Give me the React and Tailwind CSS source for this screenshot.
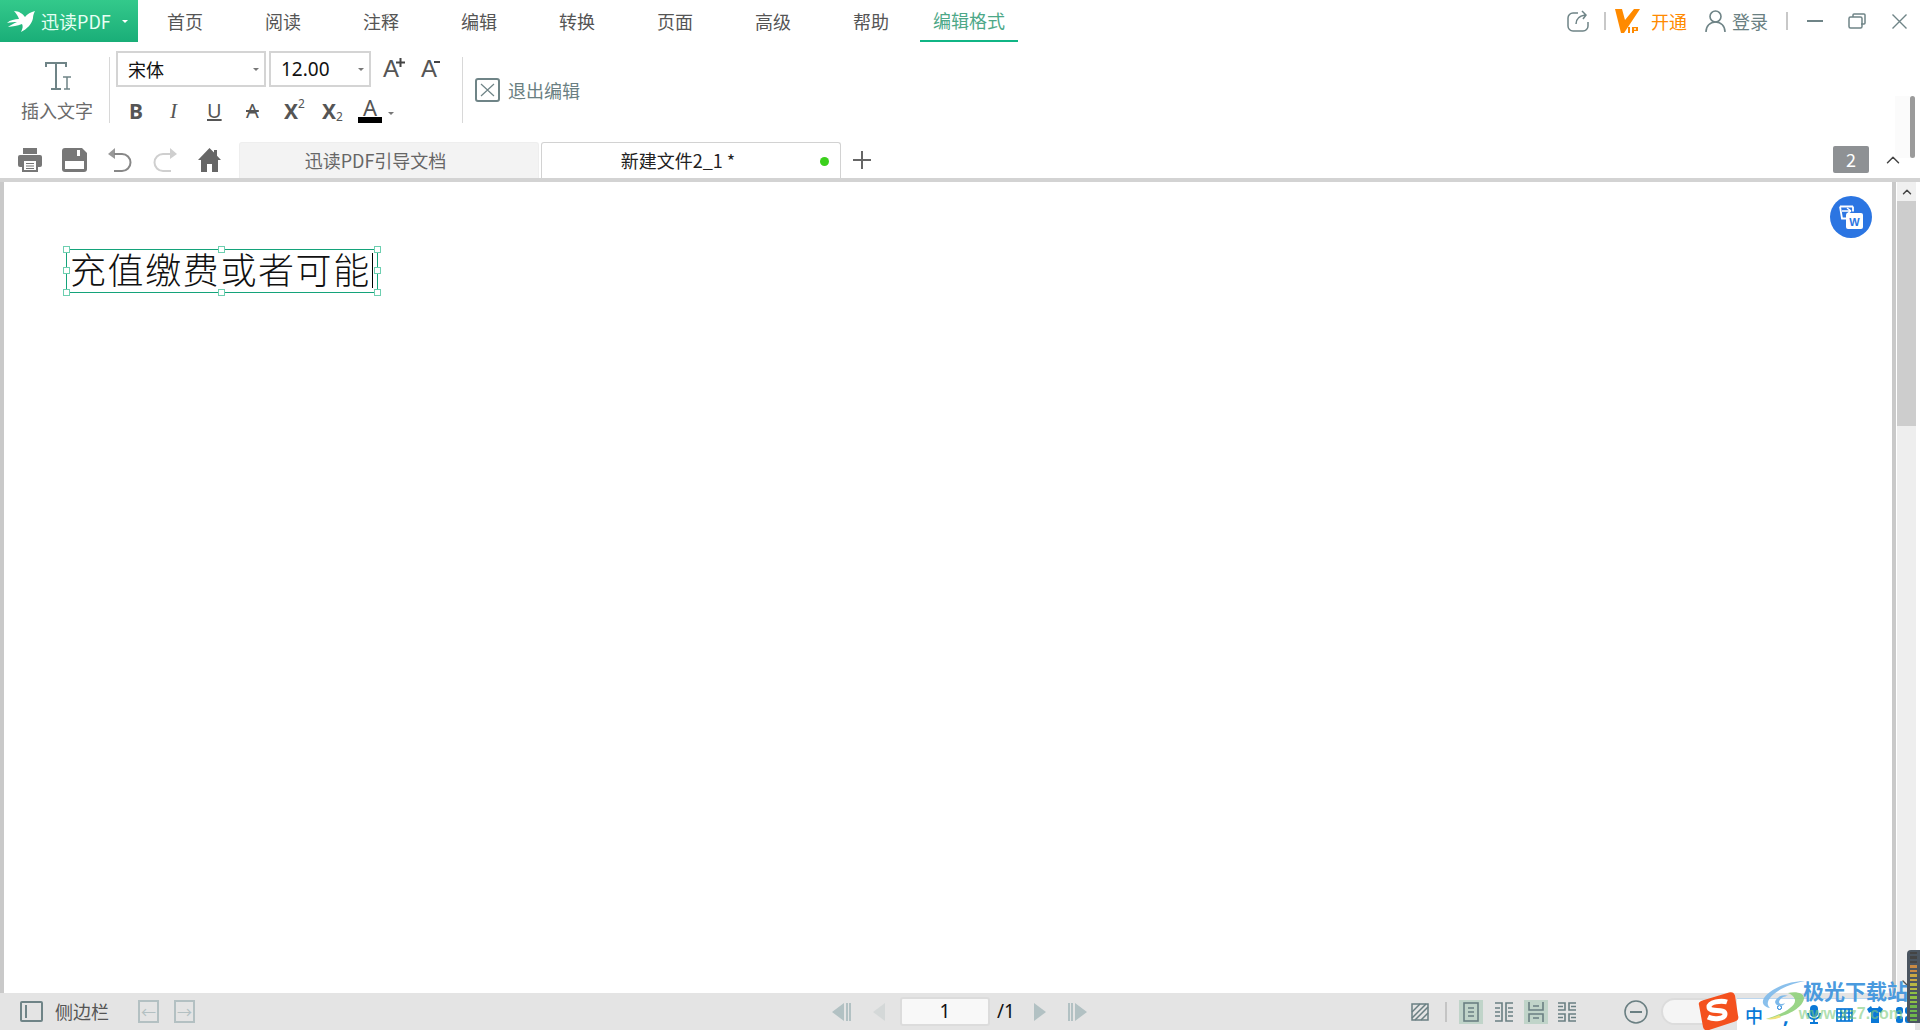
import { ChevronUp, ChevronDown } from 'lucide-react'

const cjk = { fontFamily: '"Noto Sans CJK SC", "Liberation Sans", sans-serif' }
const latin = { fontFamily: '"Noto Sans", sans-serif' }
const arial = { fontFamily: '"Liberation Sans", sans-serif' }

const tabs = ['首页', '阅读', '注释', '编辑', '转换', '页面', '高级', '帮助']

function Caret({ className = '' }) {
  return <span className={`w-0 h-0 border-x-[3px] border-x-transparent border-t-[3px] ${className}`} />
}

function Swallow() {
  return (
    <svg width="28" height="22" viewBox="0 0 28 22" fill="#fff">
      <path d="M7 1c5 0 9 3 11 6 2-3 6-5 10-6-1 2-2 4-2 7-1 6-6 11-12 14 2-4 2-6 1-8-5 2-9 2-14 3 3-2 6-4 9-5-3 0-6 0-10 1 3-3 8-4 12-4C11 6 9 3 7 1z" />
    </svg>
  )
}

function InsertTextIcon() {
  return (
    <svg width="27" height="29" viewBox="0 0 27 29" fill="none" stroke="#6f8487" strokeWidth="2">
      <path d="M1 6V2h20v4M11 2v26M6 28h10" />
      <path d="M18 16h8M22 16v12M19 28h6" strokeWidth="1.5" />
    </svg>
  )
}

function PageIcon({ children, active }) {
  return (
    <span className={`w-6 h-6 flex items-center justify-center ${active ? 'bg-[#c0d4c9]' : ''}`}>
      <svg width="18" height="20" viewBox="0 0 18 20" fill="none" stroke="#6a7f82" strokeWidth="1.6">{children}</svg>
    </span>
  )
}

function ImeBar() {
  return (
    <div className="absolute left-[1737px] bottom-0 w-[178px] h-[32px] bg-white border-t border-[#bcd6ee] flex items-center pl-[8px] text-[#0a78d7]">
      <span className="w-[18px] text-[18px] font-medium leading-none" style={cjk}>中</span>
      <span className="relative ml-[13px] w-[16px] h-[24px]">
        <span className="absolute left-[1px] top-[2px] w-[5px] h-[5px] rounded-full border border-[#0a78d7]" />
        <span className="absolute left-[7px] top-[3px] text-[20px] font-bold leading-none" style={latin}>,</span>
      </span>
      <svg width="14" height="19" viewBox="0 0 14 19" fill="#0a78d7" className="ml-[15px]">
        <rect x="3" y="0" width="8" height="12" rx="4" />
        <path d="M1 8c0 8 12 8 12 0" fill="none" stroke="#0a78d7" strokeWidth="1.8" />
        <path d="M7 14v3M3 18h8" stroke="#0a78d7" strokeWidth="1.8" />
      </svg>
      <svg width="17" height="14" viewBox="0 0 17 14" fill="none" stroke="#0a78d7" strokeWidth="1.7" className="ml-[15px]">
        <rect x="1" y="1" width="15" height="12" />
        <path d="M1 5h15M1 9h15M5 1v12M9 1v12M13 1v12" />
      </svg>
      <svg width="16" height="17" viewBox="0 0 16 17" fill="#0a78d7" className="ml-[14px]">
        <path d="M0 3l4-3 1 2h6l1-2 4 3-2 4-2-1v11H4V6L2 7z" />
      </svg>
      <svg width="16" height="16" viewBox="0 0 16 16" fill="#0a78d7" className="ml-[13px]">
        <rect x="0" y="0" width="7" height="7" rx="2.500" />
        <rect x="9" y="0" width="7" height="7" rx="2.500" />
        <rect x="0" y="9" width="7" height="7" rx="2.500" />
        <rect x="9" y="9" width="7" height="7" rx="2.500" />
      </svg>
    </div>
  )
}

function Watermark() {
  return (
    <>
      <svg width="44" height="40" viewBox="0 0 44 40" className="absolute left-[1762px] top-[980px]">
        <path d="M43 1C27 1 9 8 2 18c-3 5 0 9 6 10-3-3-3-6 0-10C14 10 28 4 43 1z" fill="#7db9ea" opacity="0.9" />
        <path d="M13 22c1-5 8-8 13-6-4 0-8 2-9 6 0 2 3 3 6 1-2 4-9 4-10-1z" fill="#7db9ea" />
        <path d="M26 13c8-2 16 0 16 5 0 9-18 20-38 21 14-4 30-12 29-19-1-4-4-6-7-7z" fill="#8fd07a" opacity="0.9" />
        <path d="M4 39c5-1 9-2 13-4l2 2c-4 2-10 3-15 2z" fill="#f0e27a" />
      </svg>
      <span className="absolute right-[12px] bottom-[29px] text-[21px] font-bold leading-none text-[#4a9ade] whitespace-nowrap" style={cjk}>极光下载站</span>
      <span className="absolute right-[17px] bottom-[8px] text-[16px] font-bold leading-none text-[#7ccb7a]/60 whitespace-nowrap" style={arial}>www.xz7.com</span>
    </>
  )
}

export default function App() {
  return (
    <div className="relative w-[1920px] h-[1030px] overflow-hidden bg-white flex flex-col text-[#555]" style={cjk}>
      {/* menu row */}
      <div className="h-[42px] flex shrink-0">
        <div className="w-[138px] h-[42px] bg-gradient-to-b from-[#33c98b] to-[#19ae78] flex items-center pl-[7px] text-white">
          <Swallow />
          <span className="ml-[6px] text-[18px] text-[#e6fff4]">迅读PDF</span>
          <Caret className="ml-[11px] border-t-white" />
        </div>
        <div className="flex -ml-[2px]">
          {tabs.map(t => (
            <div key={t} className="w-[98px] h-[42px] flex items-center justify-center text-[18px] text-[#555]">{t}</div>
          ))}
          <div className="w-[98px] h-[42px] flex items-center justify-center text-[18px] text-[#4da888] border-b-2 border-[#10b585]">编辑格式</div>
        </div>
        <div className="ml-auto flex items-center h-[42px] mr-[13px]">
          <svg width="22" height="22" viewBox="0 0 22 22" fill="none" stroke="#6f8487" strokeWidth="1.5">
            <path d="M11 3H6a5 5 0 0 0-5 5v8a5 5 0 0 0 5 5h10a5 5 0 0 0 5-5v-4" />
            <path d="M9 14c0-5 3-8 9-9M15 1l4 4-3 4" />
          </svg>
          <span className="ml-[15px] w-[2px] h-[18px] bg-[#c8c8c8]" />
          <svg width="25" height="24" viewBox="0 0 25 24" className="ml-[9px]" fill="#ff8a00">
            <path d="M0 0h7l3 11L19 0h6L9 24H6z" />
            <path d="M13 18h2v6h-2zM17 18h6v4h-4v2h-2zM19 19.300v1.400h2v-1.400z" />
          </svg>
          <span className="ml-[11px] text-[18px] text-[#ff8a00]">开通</span>
          <svg width="21" height="22" viewBox="0 0 21 22" fill="none" stroke="#6f8487" strokeWidth="1.6" className="ml-[18px]">
            <circle cx="10.500" cy="6.500" r="5.500" />
            <path d="M1 22c0-6 4-10 9.500-10S20 16 20 22" />
          </svg>
          <span className="ml-[6px] text-[18px] text-[#6a7f82]">登录</span>
          <span className="ml-[18px] w-[2px] h-[18px] bg-[#c8c8c8]" />
          <span className="ml-[19px] w-[16px] h-[1.5px] bg-[#6f8487]" />
          <svg width="18" height="16" viewBox="0 0 18 16" fill="none" stroke="#6f8487" strokeWidth="1.5" className="ml-[25px]">
            <rect x="1" y="4" width="13" height="11" rx="1.500" />
            <path d="M5 4V2a1 1 0 0 1 1-1h10a1 1 0 0 1 1 1v8a1 1 0 0 1-1 1h-3" />
          </svg>
          <svg width="15" height="15" viewBox="0 0 15 15" stroke="#6f8487" strokeWidth="1.4" className="ml-[26px]">
            <path d="M0.500 0.500l14 14M14.500 0.500l-14 14" />
          </svg>
        </div>
      </div>

      {/* ribbon */}
      <div className="h-[99px] flex shrink-0 relative">
        <div className="w-[109px] flex flex-col items-center pl-[5px]">
          <div className="mt-[19px] h-[29px] ml-[2px]"><InsertTextIcon /></div>
          <span className="mt-[8px] text-[18px] leading-[24px] text-[#6b6b6b]">插入文字</span>
        </div>
        <div className="mt-[15px] w-[1px] h-[66px] bg-[#d8d8d8]" />
        <div className="ml-[6px] flex flex-col">
          <div className="mt-[9px] h-[36px] flex items-center">
            <div className="w-[150px] h-[36px] border-2 border-[#d4d4d4] flex items-center pl-[10px] pr-[5px] justify-between text-[18px] text-[#111]">
              宋体<Caret className="border-t-[#777]" />
            </div>
            <div className="ml-[3px] w-[102px] h-[36px] border-2 border-[#d4d4d4] flex items-center pl-[10px] pr-[5px] justify-between text-[19px] text-[#111]" style={latin}>
              12.00<Caret className="border-t-[#777]" />
            </div>
            <div className="ml-[12px] flex gap-[18px]">
              <span className="relative w-5 h-6 flex items-end text-[#555] text-[24px] leading-none" style={arial}>
                A
                <svg width="9" height="9" viewBox="0 0 9 9" stroke="#444" strokeWidth="2" className="absolute left-[13px] top-[1px]">
                  <path d="M4.500 0v9M0 4.500h9" />
                </svg>
              </span>
              <span className="relative w-5 h-6 flex items-end text-[#555] text-[24px] leading-none" style={arial}>
                A
                <span className="absolute left-[13px] top-[4px] w-[6px] h-[2px] bg-[#444]" />
              </span>
            </div>
          </div>
          <div className="mt-[10px] flex items-end h-[26px] text-[#555]" style={latin}>
            <span className="ml-[13px] w-[14px] text-[21px] font-bold leading-[24px]">B</span>
            <span className="ml-[27px] w-[12px] text-[21px] italic leading-[24px]" style={{ fontFamily: '"Liberation Serif", serif' }}>I</span>
            <span className="ml-[25px] w-[14px] text-[20px] underline leading-[24px]">U</span>
            <span className="ml-[25px] w-[14px] text-[20px] line-through leading-[24px]">A</span>
            <span className="ml-[24px] w-[20px] text-[21px] font-bold leading-[24px] relative">X<span className="absolute left-[14px] -top-[1px] text-[12px] font-normal leading-none">2</span></span>
            <span className="ml-[18px] w-[20px] text-[21px] font-bold leading-[24px] relative">X<span className="absolute left-[14px] bottom-0 text-[12px] font-normal leading-none">2</span></span>
            <span className="ml-[16px] w-[24px] flex flex-col items-center h-[26px] text-[22px] leading-[20px]">A<span className="w-[24px] h-[6px] bg-black" /></span>
            <Caret className="ml-[6px] mb-[8px] border-t-[#777]" />
          </div>
        </div>
        <div className="ml-[21px] mt-[15px] w-[1px] h-[66px] bg-[#d8d8d8]" />
        <div className="ml-[12px] flex items-center h-[96px]">
          <svg width="25" height="24" viewBox="0 0 25 24" fill="none" stroke="#6f8487">
            <rect x="1" y="1" width="23" height="22" rx="2" strokeWidth="2" />
            <path d="M6 6l13 12M19 6L6 18" strokeWidth="1.2" />
          </svg>
          <span className="ml-[8px] text-[18px] text-[#6a7f82]">退出编辑</span>
        </div>
      </div>

      {/* document tabs */}
      <div className="h-[37px] flex shrink-0 items-end relative">
        <div className="w-[239px] h-[37px] flex items-center pl-[18px]">
          <svg width="24" height="24" viewBox="0 0 24 24" fill="#777">
            <path d="M5 0h14v6H5z" />
            <rect x="0" y="7" width="24" height="12" rx="2" />
            <rect x="5" y="12" width="14" height="11" fill="#fff" stroke="#777" strokeWidth="2" />
            <path d="M8 15.500h8M8 18h8M8 20.500h8" stroke="#777" strokeWidth="1.2" />
          </svg>
          <svg width="25" height="24" viewBox="0 0 25 24" fill="#777" className="ml-[20px]">
            <path d="M3 0h17l5 5v16a3 3 0 0 1-3 3H3a3 3 0 0 1-3-3V3a3 3 0 0 1 3-3z" />
            <rect x="3" y="13" width="19" height="8" fill="#fff" />
            <rect x="15" y="2" width="3" height="6" fill="#fff" />
          </svg>
          <svg width="24" height="24" viewBox="0 0 24 24" fill="none" stroke="#888" strokeWidth="2" className="ml-[21px]">
            <path d="M7 0L0 6l7 5z" fill="#999" stroke="none" />
            <path d="M6 6h8a8.500 8.500 0 0 1 0 17H6" />
          </svg>
          <svg width="24" height="24" viewBox="0 0 24 24" fill="none" stroke="#cfcfcf" strokeWidth="2" className="ml-[21px]">
            <path d="M17 0l7 6-7 5z" fill="#cfcfcf" stroke="none" />
            <path d="M18 6h-8a8.500 8.500 0 0 0 0 17h8" />
          </svg>
          <svg width="23" height="24" viewBox="0 0 23 24" fill="#666" className="ml-[21px]">
            <path d="M11.500 0L0 12h3v12h6v-8h5v8h6V12h3l-4-4.200V2h-3v2.600z" />
          </svg>
        </div>
        <div className="w-[300px] h-[36px] bg-[#f3f3f3] rounded-t-[3px] border-t border-x border-[#eeeeee] flex items-center justify-center pr-[27px] text-[18px] text-[#666]">迅读PDF引导文档</div>
        <div className="ml-[2px] w-[300px] h-[36px] bg-white rounded-t-[3px] border-t border-x border-[#d2d2d2] flex items-center justify-center pr-[26px] text-[18px] text-[#222] relative">
          新建文件2_1 *
          <span className="absolute right-[11px] top-[14px] w-[9px] h-[9px] rounded-full bg-[#3bd01c]" />
        </div>
        <svg width="18" height="18" viewBox="0 0 18 18" stroke="#666" strokeWidth="2" className="ml-[12px] self-center">
          <path d="M9 0v18M0 9h18" />
        </svg>
        <div className="ml-auto self-center flex items-center">
          <span className="w-[36px] h-[27px] rounded-[2px] bg-[#8e9194] text-white text-[18px] flex items-center justify-center">2</span>
          <ChevronUp size={22} strokeWidth={1.6} color="#444" className="ml-[13px] mr-[16px]" />
        </div>
      </div>

      {/* page area */}
      <div className="flex-1 min-h-0 flex border-t-[4px] border-[#d3d3d3]">
        <div className="w-[4px] bg-[#c9c9c9]" />
        <div className="flex-1" />
        <div className="w-[4px] bg-[#c9c9c9]" />
        <div className="ml-[1px] w-[19px] bg-[#eeeeee] flex flex-col">
          <div className="h-[19px] bg-[#f0f0f0] flex items-center justify-center"><ChevronUp size={14} strokeWidth={2.5} color="#444" /></div>
          <div className="h-[225px] bg-[#cdcdcd]" />
        </div>
        <div className="w-[4px]" />
      </div>

      {/* status bar */}
      <div className="h-[37px] shrink-0 bg-[#e4e4e4] relative flex items-center">
        <span className="ml-[20px] w-[23px] h-[21px] border-2 border-[#6f8487] rounded-[2px] flex items-center pl-[3px]"><span className="w-[1.5px] h-[13px] bg-[#6f8487]" /></span>
        <span className="ml-[12px] text-[18px] text-[#555]">侧边栏</span>
        <span className="ml-[29px] w-[21px] h-[23px] border-2 border-[#b3c0c2] flex items-center justify-center text-[#b3c0c2] text-[15px] leading-none">←</span>
        <span className="ml-[15px] w-[21px] h-[23px] border-2 border-[#b3c0c2] flex items-center justify-center text-[#b3c0c2] text-[15px] leading-none">→</span>

        <svg width="19" height="18" viewBox="0 0 19 18" fill="#b2c1c3" className="ml-[637px]"><path d="M12 0v18L0 9zM14 0h2v18h-2zM17 0h2v18h-2z" /></svg>
        <svg width="12" height="18" viewBox="0 0 12 18" fill="#d4d8d8" className="ml-[22px]"><path d="M12 0v18L0 9z" /></svg>
        <span className="ml-[15px] w-[90px] h-[29px] bg-[#f8f8f8] border-2 border-[#dcdcdc] rounded-[3px] flex items-center justify-center text-[19px] text-[#111]" style={latin}>1</span>
        <span className="ml-[7px] text-[19px] text-[#111]" style={latin}>/1</span>
        <svg width="12" height="18" viewBox="0 0 12 18" fill="#b2c1c3" className="ml-[19px]"><path d="M0 0v18L12 9z" /></svg>
        <svg width="19" height="18" viewBox="0 0 19 18" fill="#b2c1c3" className="ml-[22px]"><path d="M7 0v18l12-9zM0 0h2v18H0zM3 0h2v18H3z" /></svg>

        <svg width="18" height="18" viewBox="0 0 18 18" fill="none" stroke="#6a7f82" className="ml-[324px]" strokeWidth="1.5">
          <rect x="1" y="1" width="16" height="16" />
          <path d="M1 9l8-8M1 15L15 1M4 17L17 4M10 17l7-7" />
        </svg>
        <span className="ml-[16px] w-[2px] h-[20px] bg-[#c4c4c4]" />
        <span className="ml-[12px]">
          <PageIcon active><rect x="2" y="1" width="14" height="18" /><path d="M6 6h6M6 10h6M6 14h6" /></PageIcon>
        </span>
        <span className="ml-[9px]">
          <PageIcon><path d="M0 1h7v18H0M18 1h-7v18h7M0 6h5M0 10h5M0 14h5M13 6h5M13 10h5M13 14h5" /></PageIcon>
        </span>
        <span className="ml-[8px]">
          <PageIcon active><path d="M2 0v8h14V0M2 20v-8h14v8M6 4h6M6 16h6" /></PageIcon>
        </span>
        <span className="ml-[7px]">
          <PageIcon><path d="M0 1h7v7H0M18 1h-7v7h7M0 19h7v-7H0M18 19h-7v-7h7M0 4.500h5M13 4.500h5M0 15.500h5M13 15.500h5" /></PageIcon>
        </span>
        <svg width="24" height="24" viewBox="0 0 24 24" fill="none" stroke="#6a7f82" strokeWidth="1.6" className="ml-[45px]">
          <circle cx="12" cy="12" r="11" />
          <path d="M6 12h12" strokeWidth="2" />
        </svg>
        <span className="ml-[13px] w-[70px] h-[27px] bg-[#f5f5f5] border-2 border-[#dcdcdc] rounded-full" />
        <ImeBar />
        <svg width="42" height="38" viewBox="0 0 42 38" className="absolute left-[1697px] bottom-0">
          <path d="M7 8L32 0.500c3-1 5 0 6 3l3 20c1 3 0 5-3 6L12 38c-3 1-5 0-6-3L2 13c-1-3 2-4 5-5z" fill="#f4511e" />
          <path d="M30 10c-6-2-18 0-18 5 0 6 16 1 16 7 0 5-11 6-17 3" fill="none" stroke="#fff" strokeWidth="5" />
        </svg>
      </div>

      <ChevronDown size={16} strokeWidth={2} color="#555" className="absolute left-[1899px] top-[975px]" />
      <Watermark />

      {/* text box being edited */}
      <div className="absolute left-[66px] top-[249px] w-[312px] h-[44px] border border-[#14a37a] flex items-center pl-[3px]">
        <span className="text-[36px] leading-none tracking-[1.6px] font-light text-[#111] whitespace-nowrap mb-[7px]">充值缴费或者可能</span>
        <span className="absolute right-[4px] top-[3px] w-[1px] h-[35px] bg-black" />
        <span className="absolute -left-[4px] -top-[4px] w-[7px] h-[7px] bg-white border border-[#6dcfb0]" />
        <span className="absolute left-[151px] -top-[4px] w-[7px] h-[7px] bg-white border border-[#6dcfb0]" />
        <span className="absolute -right-[4px] -top-[4px] w-[7px] h-[7px] bg-white border border-[#6dcfb0]" />
        <span className="absolute -left-[4px] top-[17px] w-[7px] h-[7px] bg-white border border-[#6dcfb0]" />
        <span className="absolute -right-[4px] top-[17px] w-[7px] h-[7px] bg-white border border-[#6dcfb0]" />
        <span className="absolute -left-[4px] -bottom-[4px] w-[7px] h-[7px] bg-white border border-[#6dcfb0]" />
        <span className="absolute left-[151px] -bottom-[4px] w-[7px] h-[7px] bg-white border border-[#6dcfb0]" />
        <span className="absolute -right-[4px] -bottom-[4px] w-[7px] h-[7px] bg-white border border-[#6dcfb0]" />
      </div>

      {/* floating to-word button */}
      <div className="absolute left-[1830px] top-[196px] w-[42px] h-[42px] rounded-full bg-[#2b75e2] flex items-center justify-center">
        <svg width="24" height="24" viewBox="0 0 24 24" fill="none">
          <path d="M1 1.500h13M1 1.500l2 12h4M14 1.500v5" stroke="#fff" strokeWidth="1.8" />
          <path d="M3 6h9M12 6l-4-3M12 6l-4 3" stroke="#fff" strokeWidth="1.5" />
          <rect x="7" y="8" width="17" height="16" rx="2" fill="#fff" />
          <text x="15.500" y="21" textAnchor="middle" fontSize="11" fontWeight="700" fill="#2b75e2" fontFamily="Liberation Sans">W</text>
        </svg>
      </div>

      {/* ribbon overlay scrollbar */}
      <div className="absolute left-[1895px] top-[96px] w-[20px] h-[62px] bg-[#fbfbfb] flex justify-end">
        <div className="w-[5px] h-[62px] rounded-full bg-[#9b9b9b]" />
      </div>

      {/* dark meter widget in the corner */}
      <div className="absolute right-0 top-[950px] w-[13px] h-[73px] rounded-l-[4px] bg-[#4b5560] flex flex-col justify-end items-center gap-[2px] py-[2px]">
        {['#444', '#444', '#444', '#c98a44', '#c98a44', '#c9a844', '#c9a844', '#b8b844', '#b8b844', '#8fc044', '#8fc044', '#8fc044', '#70b84c', '#70b84c', '#70b84c', '#70b84c'].map((c, i) => (
          <span key={i} className="w-[7px] h-[2.5px]" style={{ backgroundColor: c }} />
        ))}
      </div>
    </div>
  )
}
